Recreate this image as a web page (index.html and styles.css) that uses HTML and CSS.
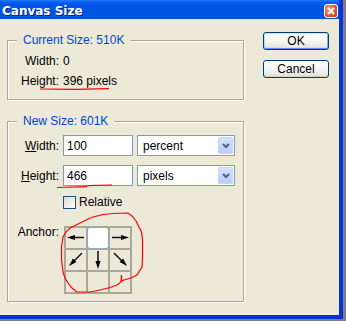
FILE: index.html
```html
<!doctype html>
<html lang="en">

<head>
    <meta charset="UTF-8" />
    <title>Canvas Size</title>
    <link rel="stylesheet" href="styles.css">
</head>

<body>
    <div class="window">
        <div class="titlebar">
            <span class="title">Canvas Size</span>
            <button class="close-btn" aria-label="Close">
                <svg width="8" height="8" viewBox="0 0 8 8">
                    <path d="M1 1 L7 7 M7 1 L1 7" stroke="#fff" stroke-width="2" />
                </svg>
            </button>
        </div>

        <div class="content">
            <div class="groups">
                <div class="group group-current">
                    <span class="group-title">Current Size: 510K</span>
                    <div class="info">
                        <span class="label">Width:</span>
                        <span>0</span>
                        <span class="label">Height:</span>
                        <span>396 pixels</span>
                    </div>
                </div>

                <div class="group group-new">
                    <span class="group-title">New Size: 601K</span>
                    <div class="form">
                        <label class="label"><u>W</u>idth:</label>
                        <input class="field" type="text" value="100">
                        <div class="combo">
                            <span class="combo-text">percent</span>
                            <span class="combo-arrow">
                                <svg width="8" height="6" viewBox="0 0 8 6">
                                    <path d="M1 1 L4 4 L7 1" fill="none" stroke="#4d6185" stroke-width="2" />
                                </svg>
                            </span>
                        </div>

                        <label class="label"><u>H</u>eight:</label>
                        <input class="field" type="text" value="466">
                        <div class="combo">
                            <span class="combo-text">pixels</span>
                            <span class="combo-arrow">
                                <svg width="8" height="6" viewBox="0 0 8 6">
                                    <path d="M1 1 L4 4 L7 1" fill="none" stroke="#4d6185" stroke-width="2" />
                                </svg>
                            </span>
                        </div>

                        <div class="check-row">
                            <span class="check"></span>
                            <span>Relative</span>
                        </div>

                        <span class="label anchor-label">Anchor:</span>
                        <div class="anchor">
                            <span class="cell">
                                <svg viewBox="0 0 20 20"><line x1="8" y1="9.5" x2="18" y2="9.5" /><polygon points="1,9.5 9,7 9,12" /></svg>
                            </span>
                            <span class="cell cell-active"></span>
                            <span class="cell">
                                <svg viewBox="0 0 20 20"><line x1="2" y1="9.5" x2="12" y2="9.5" /><polygon points="19,9.5 11,7 11,12" /></svg>
                            </span>
                            <span class="cell">
                                <svg viewBox="0 0 20 20"><line x1="16" y1="3" x2="7" y2="12" /><polygon points="3,16 10.4,12.1 6.9,8.6" /></svg>
                            </span>
                            <span class="cell">
                                <svg viewBox="0 0 20 20"><line x1="10" y1="1" x2="10" y2="12" /><polygon points="10,19 7.5,11 12.5,11" /></svg>
                            </span>
                            <span class="cell">
                                <svg viewBox="0 0 20 20"><line x1="4" y1="3" x2="13" y2="12" /><polygon points="17,16 9.6,12.1 13.1,8.6" /></svg>
                            </span>
                            <span class="cell"></span>
                            <span class="cell"></span>
                            <span class="cell"></span>
                        </div>
                    </div>
                </div>
            </div>

            <div class="actions">
                <button class="btn btn-default">OK</button>
                <button class="btn">Cancel</button>
            </div>
        </div>
    </div>

    <!-- red pen marks drawn over the dialog -->
    <svg class="marks" width="346" height="321" viewBox="0 0 346 321">
        <polyline points="40,89 75,89.3 109,88.7" />
        <polyline points="57,187.5 87,186.7" />
        <polyline points="87,185.7 112,185" />
        <polyline points="93,217 103,214.5 113,213.5 128,213 132,216 136,221 139,227 141.5,232 142.5,240 142.5,258 142,267 137,275 131,278 124,280 121.5,281 121.5,275 121,282 117,285 110,287.5 100,290 90,292 77,292 72,288 68,283 65,278 63,272 61.5,260 61.5,247 63,237 66,232 70,228 75,225.5 81,222.5 87,219.5 93,217" />
    </svg>
</body>

</html>
```

FILE: styles.css
```css
* {
    box-sizing: border-box;
}

body {
    margin: 0;
    width: 346px;
    height: 321px;
    overflow: hidden;
    position: relative;
    background: #7f7f7f;
    font-family: "Liberation Sans", Arial, sans-serif;
    font-size: 12px;
    line-height: 14px;
    color: #000;
}

.window {
    width: 343px;
    height: 319px;
    background: #ece9d8;
    border-right: 4px solid #0632d6;
    border-bottom: 4px solid #0632d6;
}

/* title bar */
.titlebar {
    height: 19px;
    display: flex;
    justify-content: space-between;
    align-items: flex-start;
    padding: 0 1px 0 2px;
    background: linear-gradient(#2a7cf8 0, #0a5ff0 2px, #0055e5 5px, #0054e3 14px, #0052de 19px);
}

.title {
    padding-top: 4px;
    font: bold 12px/14px "DejaVu Sans", Verdana, sans-serif;
    color: #fff;
    text-shadow: 1px 1px 0 #0a1e7a;
}

.close-btn {
    margin-top: 4px;
    width: 14px;
    height: 14px;
    padding: 0;
    border: 1px solid #fff;
    border-radius: 3px;
    background: radial-gradient(circle at 30% 30%, #f09a7c 0, #e25a2e 55%, #c33b12 100%);
    display: flex;
    align-items: center;
    justify-content: center;
}

/* layout */
.content {
    display: flex;
    padding-left: 7px;
}

.groups {
    padding-top: 21px;
}

.group {
    position: relative;
    width: 237px;
    border: 1px solid #aca899;
    box-shadow: 1px 1px 0 #fff, inset 1px 1px 0 #fff;
}

.group-title {
    position: absolute;
    top: -8px;
    left: 9px;
    padding: 0 6px;
    background: #ece9d8;
    color: #0046d5;
}

.group-current {
    padding: 13px 0 11px;
}

.group-new {
    margin-top: 21px;
    padding: 13px 0 7px;
}

.info {
    display: grid;
    grid-template-columns: 51px auto;
    column-gap: 4px;
    row-gap: 6px;
}

.label {
    text-align: right;
}

.form {
    display: grid;
    grid-template-columns: 51px 70px 98px;
    column-gap: 4px;
    row-gap: 9px;
    align-items: center;
}

.field {
    width: 70px;
    height: 21px;
    margin: 0;
    padding: 0 3px;
    border: 1px solid #7f9db9;
    background: #fff;
    font: 12px/14px "Liberation Sans", Arial, sans-serif;
    color: #000;
}

.combo {
    height: 21px;
    display: flex;
    align-items: center;
    border: 1px solid #7f9db9;
    background: #fff;
}

.combo-text {
    flex: 1;
    padding-left: 5px;
}

.combo-arrow {
    width: 15px;
    height: 17px;
    margin-right: 1px;
    border-radius: 2px;
    background: linear-gradient(#d7e3fc, #b8cbf6);
    box-shadow: inset 0 0 0 1px #c6d6fa;
    display: flex;
    align-items: center;
    justify-content: center;
}

.check-row {
    grid-column: 2 / 4;
    display: flex;
    align-items: center;
    gap: 3px;
}

.check {
    width: 13px;
    height: 13px;
    border: 1px solid #1c5180;
    background: linear-gradient(135deg, #dcdcd7, #fff);
}

.anchor-label {
    align-self: start;
    margin-top: 7px;
}

.anchor {
    grid-column: 2 / 4;
    align-self: start;
    margin: 8px 0 0 1px;
    width: 68px;
    display: grid;
    grid-template-columns: repeat(3, 20px);
    grid-auto-rows: 20px;
    gap: 2px;
    padding: 2px;
    background: #aca899;
}

.cell {
    background: #ece9d8;
}

.cell svg {
    display: block;
    width: 20px;
    height: 20px;
}

.cell line {
    stroke: #111;
    stroke-width: 1.5;
}

.cell polygon {
    fill: #000;
}

.cell-active {
    background: #fff;
    border-radius: 2px;
    box-shadow: 0 0 0 1px #8fa8c8;
}

/* buttons */
.actions {
    display: flex;
    flex-direction: column;
    gap: 10px;
    margin-left: 19px;
    padding-top: 13px;
}

.btn {
    width: 66px;
    height: 18px;
    padding: 0;
    border: 1px solid #003c74;
    border-radius: 3px;
    background: linear-gradient(#fff, #f4f4f0 55%, #e8e6de 85%, #d6d0c5);
    font: 12px/14px "Liberation Sans", Arial, sans-serif;
    color: #000;
}

.btn-default {
    box-shadow: inset 0 1px 0 #cee7ff, inset 1px 0 0 #bcd4f6, inset -1px 0 0 #89ade4, inset 0 -1px 0 #6982ee;
}

/* red pen marks */
.marks {
    position: absolute;
    left: 0;
    top: 0;
    pointer-events: none;
}

.marks polyline {
    fill: none;
    stroke: #f00;
    stroke-width: 1.2;
}
```
